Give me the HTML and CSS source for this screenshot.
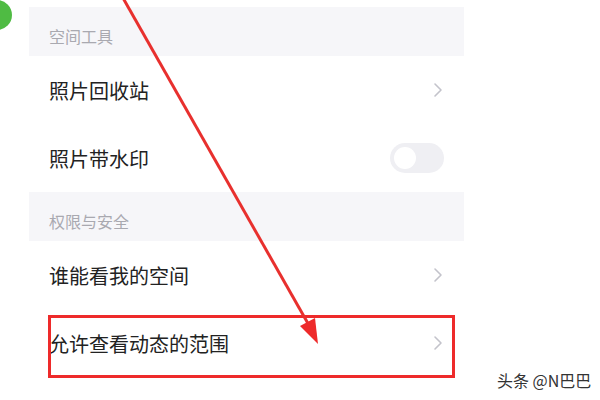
FILE: index.html
```html
<!DOCTYPE html>
<html lang="zh">
<head>
    <meta charset="UTF-8">
    <meta name="viewport" content="width=device-width, initial-scale=1.0">
    <title>空间设置</title>
    <link rel="stylesheet" href="styles.css">
</head>
<body>
    <div class="dot"></div>

    <div class="panel">
        <div class="section">空间工具</div>
        <div class="row">
            <span>照片回收站</span>
            <svg class="chevron" width="10" height="16" viewBox="0 0 10 16"><path d="M2 2l6 6-6 6" fill="none" stroke="#c3c3cb" stroke-width="1.6" stroke-linecap="round" stroke-linejoin="round"/></svg>
        </div>
        <div class="row">
            <span>照片带水印</span>
            <div class="toggle"><div class="knob"></div></div>
        </div>
        <div class="section">权限与安全</div>
        <div class="row">
            <span>谁能看我的空间</span>
            <svg class="chevron" width="10" height="16" viewBox="0 0 10 16"><path d="M2 2l6 6-6 6" fill="none" stroke="#c3c3cb" stroke-width="1.6" stroke-linecap="round" stroke-linejoin="round"/></svg>
        </div>
        <div class="row">
            <span>允许查看动态的范围</span>
            <svg class="chevron" width="10" height="16" viewBox="0 0 10 16"><path d="M2 2l6 6-6 6" fill="none" stroke="#c3c3cb" stroke-width="1.6" stroke-linecap="round" stroke-linejoin="round"/></svg>
        </div>
    </div>

    <!-- annotation drawn over the screenshot -->
    <svg class="marks" width="600" height="400" viewBox="0 0 600 400">
        <rect x="49.5" y="316.5" width="404" height="60" fill="none" stroke="#ee2a2a" stroke-width="3"/>
        <line x1="123" y1="-2" x2="310" y2="327" stroke="#e8302e" stroke-width="3"/>
        <path d="M318 344 L300 326 L315 318 Z" fill="#ee2a2a"/>
    </svg>

    <div class="watermark">头条 @N巴巴</div>
</body>
</html>
```

FILE: styles.css
```css
body {
    margin: 0;
    padding: 0;
    background-color: #fff;
    font-family: "Noto Sans CJK SC", "Noto Sans", sans-serif;
    width: 600px;
    height: 400px;
    overflow: hidden;
    position: relative;
}

.dot {
    position: absolute;
    left: -18px;
    top: 0;
    width: 30px;
    height: 30px;
    border-radius: 50%;
    background-color: #4fbb43;
}

.panel {
    margin: 7px 0 0 29px;
    width: 435px;
}

.section {
    height: 49px;
    display: flex;
    align-items: center;
    padding: 8px 0 0 20px;
    box-sizing: border-box;
    background-color: #f6f6f9;
    color: #a9a9b0;
    font-size: 16px;
}

.row {
    height: 68px;
    display: flex;
    align-items: center;
    justify-content: space-between;
    padding: 0 21px 0 20px;
    color: #222;
    font-size: 20px;
}

.toggle {
    width: 54px;
    height: 30px;
    border-radius: 15px;
    background-color: #efeff3;
    margin-right: -1px;
    display: flex;
    align-items: center;
    padding-left: 4px;
    box-sizing: border-box;
}

.knob {
    width: 22px;
    height: 22px;
    border-radius: 50%;
    background-color: #fff;
}

.marks {
    position: absolute;
    left: 0;
    top: 0;
}

.watermark {
    position: absolute;
    left: 497px;
    top: 368px;
    font-size: 16px;
    color: #333;
    text-shadow: 0 0 2px #fff;
}
```
